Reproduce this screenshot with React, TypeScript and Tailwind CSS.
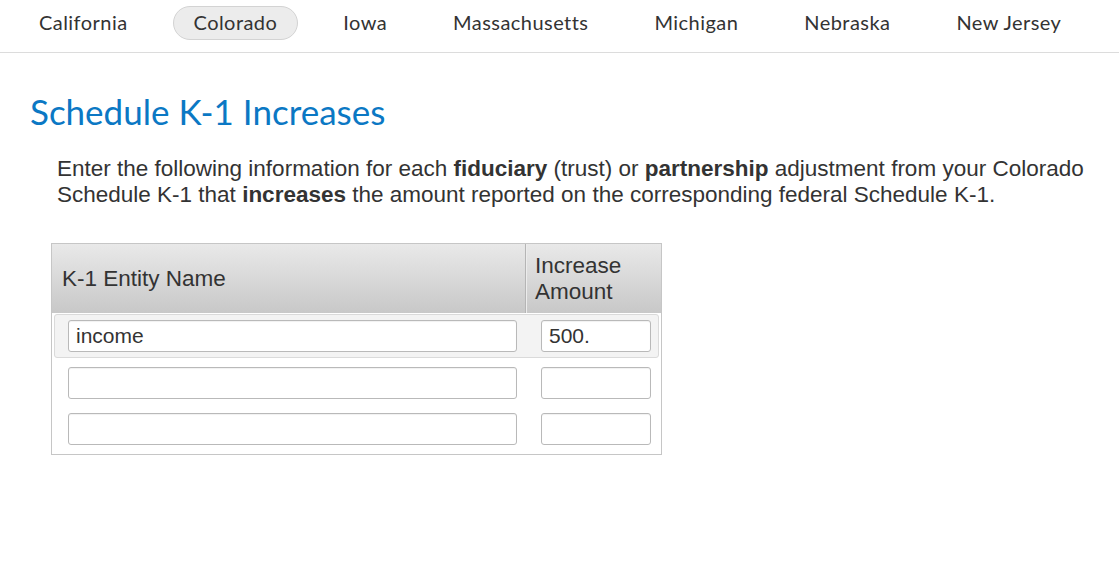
import React from "react";

const states = [
  "California",
  "Colorado",
  "Iowa",
  "Massachusetts",
  "Michigan",
  "Nebraska",
  "New Jersey",
];

function Field({ value, wide }: { value?: string; wide?: boolean }) {
  return (
    <input
      readOnly
      value={value ?? ""}
      className={`${
        wide ? "w-[449px]" : "w-[110px]"
      } h-[32px] rounded-[3px] border border-[#b9b9b9] bg-white px-[7px] text-[21px] text-[#333] shadow-[inset_0_1px_1px_rgba(0,0,0,0.06)] outline-none`}
      style={{ fontFamily: "'Liberation Sans', Arial, sans-serif" }}
    />
  );
}

export default function App() {
  return (
    <div className="min-h-[583px] w-full bg-white">
      <nav
        className="flex gap-6 border-b border-[#dcdcdc] px-[18px] pt-[6px] pb-[12px] text-[20px] tracking-[0.45px] text-[#333]"
        style={{ fontFamily: "Lato, 'Noto Sans', sans-serif" }}
      >
        {states.map((s) => (
          <span
            key={s}
            className={`flex h-[34px] items-center rounded-full border px-5 pb-[3px] ${
              s === "Colorado"
                ? "border-[#d3d3d3] bg-[#ececec]"
                : "border-transparent"
            }`}
          >
            {s}
          </span>
        ))}
      </nav>

      <h1
        className="ml-[30px] mt-[36px] text-[35px] leading-[44px] text-[#0b78c4]"
        style={{ fontFamily: "Lato, 'Noto Sans', sans-serif" }}
      >
        Schedule K-1 Increases
      </h1>

      <div style={{ fontFamily: "'Liberation Sans', Arial, sans-serif" }}>
        <p className="ml-[57px] mt-[23px] text-[22.5px] leading-[26px] text-[#333]">
          Enter the following information for each <b>fiduciary</b> (trust) or{" "}
          <b>partnership</b> adjustment from your Colorado
          <br />
          Schedule K-1 that <b>increases</b> the amount reported on the
          corresponding federal Schedule K-1.
        </p>

        <div className="ml-[51px] mt-[35px] w-[611px] border border-[#c6c6c6] pb-[9px]">
          <div className="flex h-[69px] bg-gradient-to-b from-[#e9e9e9] to-[#c8c8c8] text-[22.5px] leading-[26px] text-[#333]">
            <div className="flex w-[474px] items-center border-r border-[#b5b5b5] pl-[10px]">
              K-1 Entity Name
            </div>
            <div className="flex items-center border-l border-[#ececec] pl-[8px]">
              Increase
              <br />
              Amount
            </div>
          </div>

          <div className="mx-[2px] mt-[1px] flex h-[44px] items-center gap-6 rounded-[3px] border border-[#dadada] bg-[#f3f3f3] pl-[13px]">
            <Field wide value="income" />
            <Field value="500." />
          </div>

          <div className="mt-[9px] flex gap-6 pl-[16px]">
            <Field wide />
            <Field />
          </div>
          <div className="mt-[14px] flex gap-6 pl-[16px]">
            <Field wide />
            <Field />
          </div>
        </div>
      </div>
    </div>
  );
}
